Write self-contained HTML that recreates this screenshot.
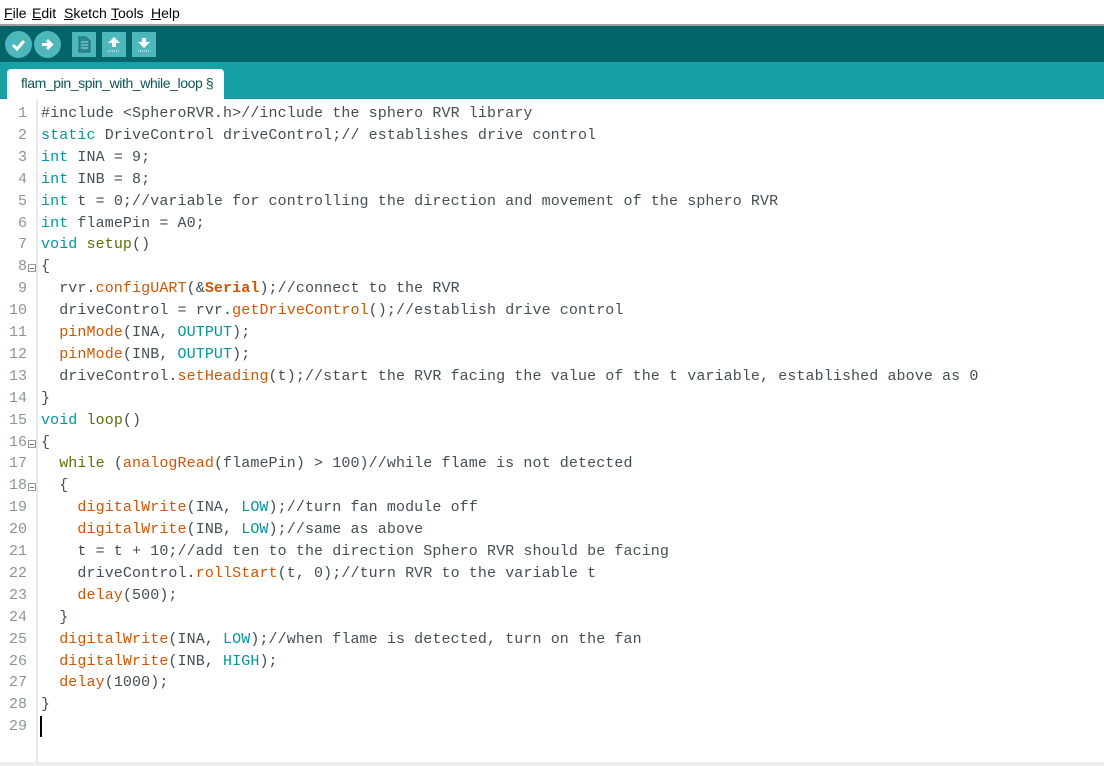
<!DOCTYPE html>
<html><head><meta charset="utf-8"><style>
*{margin:0;padding:0;box-sizing:border-box}
body{width:1104px;height:766px;overflow:hidden;background:#fff;font-family:"Liberation Sans",sans-serif;position:relative}
#menu{position:absolute;left:0;top:0;width:1104px;height:24px;background:#fff;font-size:14px;color:#000}
#menu span{position:absolute;top:5px}
#menu u{text-decoration:underline}
#sep{position:absolute;top:24px;left:0;width:1104px;height:2px;background:#a0a0a0}
#tool{position:absolute;top:26px;left:0;width:1104px;height:36px;background:#036568}
.c{position:absolute;top:5px;width:27px;height:27px;border-radius:50%;background:#4db7bb}
.s{position:absolute;top:6px;width:24px;height:25px;background:#4db7bb}
#tabs{position:absolute;top:62px;left:0;width:1104px;height:37px;background:#17a1a6;border-bottom:1px solid #128f93}
#tab{position:absolute;left:7px;top:7px;width:217px;height:30px;background:#fff;border-radius:4px 4px 0 0;color:#0c5558;font-size:14px;padding:6px 0 0 14px;letter-spacing:-0.4px}
#ed{position:absolute;top:99px;left:0;width:1104px;height:663px;background:#fff}
#gut{position:absolute;left:36px;top:99px;width:2px;height:663px;background:#e8e8e8}
#bot{position:absolute;top:762px;left:0;width:1104px;height:4px;background:#eeeeee}
.ln{position:absolute;left:0;width:27px;text-align:right;font-family:"Liberation Mono",monospace;font-size:15px;color:#8a9696;height:22px}
.fold{position:absolute;left:28px;width:8px;height:8px;border:1px solid #999;font-size:0;background:#fff}
.fold:after{content:"";position:absolute;left:1px;top:3px;width:4px;height:1px;background:#777}
.code{position:absolute;left:41px;font-family:"Liberation Mono",monospace;font-size:15px;color:#434f54;white-space:pre;letter-spacing:0.1px}
.k{color:#00979c}.o{color:#5e6d03}.f{color:#d35400}.b{color:#d35400;font-weight:bold}.n{color:#00979c}
#cur{position:absolute;left:40px;top:716px;width:2px;height:21px;background:#000}
</style></head><body>
<div id="menu">
<span style="left:4px"><u>F</u>ile</span>
<span style="left:32px"><u>E</u>dit</span>
<span style="left:64px"><u>S</u>ketch</span>
<span style="left:111px"><u>T</u>ools</span>
<span style="left:151px"><u>H</u>elp</span>
</div>
<div id="sep"></div>
<div id="tool">
<div class="c" style="left:5px"><svg width="27" height="27"><path d="M8 14l4 4 7-8" stroke="#fff" stroke-width="3" fill="none"/></svg></div>
<div class="c" style="left:34px"><svg width="27" height="27"><path d="M8 13.5h9M13 9l4.5 4.5L13 18" stroke="#fff" stroke-width="3" fill="none"/></svg></div>
<div class="s" style="left:72px"><svg width="24" height="25"><path d="M7 5h7l4 4v11H7z" fill="#2a8c90" stroke="#1c6e72"/><path d="M9 10h7M9 13h7M9 16h7" stroke="#9fd8da"/></svg></div>
<div class="s" style="left:102px"><svg width="24" height="25"><path d="M12 5l6 6h-4v4h-4v-4H6z" fill="#fff"/><path d="M6 19h12" stroke="#fff" stroke-dasharray="1 1"/></svg></div>
<div class="s" style="left:132px"><svg width="24" height="25"><path d="M12 16l6-6h-4V6h-4v4H6z" fill="#fff"/><path d="M6 19h12" stroke="#fff" stroke-dasharray="1 1"/></svg></div>
</div>
<div id="tabs"><div id="tab">flam_pin_spin_with_while_loop §</div></div>
<div id="ed"></div>
<div id="gut"></div>
<div id="bot"></div>
<div id="lines"></div>
<div id="cur"></div>
<script>
const L=[
'#include &lt;SpheroRVR.h&gt;//include the sphero RVR library',
'<span class="k">static</span> DriveControl driveControl;// establishes drive control',
'<span class="k">int</span> INA = 9;',
'<span class="k">int</span> INB = 8;',
'<span class="k">int</span> t = 0;//variable for controlling the direction and movement of the sphero RVR',
'<span class="k">int</span> flamePin = A0;',
'<span class="k">void</span> <span class="o">setup</span>()',
'{',
'  rvr.<span class="f">configUART</span>(&amp;<span class="b">Serial</span>);//connect to the RVR',
'  driveControl = rvr.<span class="f">getDriveControl</span>();//establish drive control',
'  <span class="f">pinMode</span>(INA, <span class="n">OUTPUT</span>);',
'  <span class="f">pinMode</span>(INB, <span class="n">OUTPUT</span>);',
'  driveControl.<span class="f">setHeading</span>(t);//start the RVR facing the value of the t variable, established above as 0',
'}',
'<span class="k">void</span> <span class="o">loop</span>()',
'{',
'  <span class="o">while</span> (<span class="f">analogRead</span>(flamePin) &gt; 100)//while flame is not detected',
'  {',
'    <span class="f">digitalWrite</span>(INA, <span class="n">LOW</span>);//turn fan module off',
'    <span class="f">digitalWrite</span>(INB, <span class="n">LOW</span>);//same as above',
'    t = t + 10;//add ten to the direction Sphero RVR should be facing',
'    driveControl.<span class="f">rollStart</span>(t, 0);//turn RVR to the variable t',
'    <span class="f">delay</span>(500);',
'  }',
'  <span class="f">digitalWrite</span>(INA, <span class="n">LOW</span>);//when flame is detected, turn on the fan',
'  <span class="f">digitalWrite</span>(INB, <span class="n">HIGH</span>);',
'  <span class="f">delay</span>(1000);',
'}',
''];
let h='';
L.forEach((s,i)=>{const y=105+i*21.9;const num=i+1;const fold=(num==8||num==16||num==18);
h+=`<div class="ln" style="top:${y}px">${num}</div>`;
if(fold)h+=`<div class="fold" style="top:${y+6}px"></div>`;
h+=`<div class="code" style="top:${y}px">${s}</div>`;});
document.getElementById('lines').innerHTML=h;
</script>
</body></html>
